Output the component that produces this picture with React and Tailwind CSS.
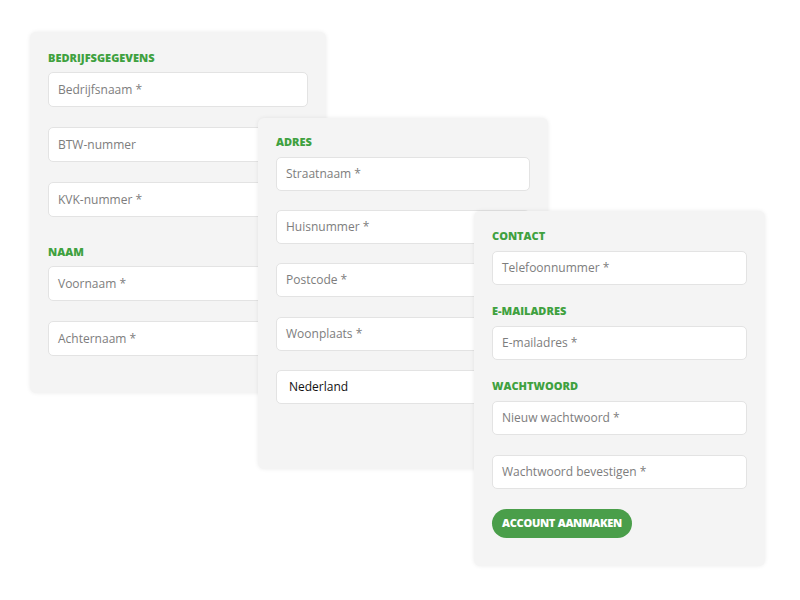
import React from 'react';

const Heading = ({ children, className = '' }) => (
  <h3 className={`text-[11px] leading-4 font-extrabold text-[#3fa13f] uppercase ${className}`}>{children}</h3>
);

const Field = ({ placeholder, value, className = '' }) => (
  <div
    className={`h-[34px] flex items-center bg-white border border-[#e3e3e3] rounded-[5px] ${value ? 'pl-3 text-[#111]' : 'pl-[9px] text-[#7d7d7d]'} text-[12px] ${className}`}
  >
    {value || placeholder}
  </div>
);

const Card = ({ className = '', children }) => (
  <div className={`absolute bg-[#f4f4f4] rounded-md shadow-[0_0_4px_rgba(0,0,0,0.08)] flex flex-col px-[18px] ${className}`}>
    {children}
  </div>
);

export default function App() {
  return (
    <div className="relative w-[800px] h-[600px] bg-white overflow-hidden" style={{ fontFamily: '"Open Sans", "Liberation Sans", sans-serif' }}>
      {/* bedrijf + naam */}
      <Card className="left-[30px] top-[32px] w-[296px] h-[361px] pt-[18px]">
        <Heading>Bedrijfsgegevens</Heading>
        <Field placeholder="Bedrijfsnaam *" className="mt-[6px] h-[35px]" />
        <Field placeholder="BTW-nummer" className="mt-[20px] h-[35px]" />
        <Field placeholder="KVK-nummer *" className="mt-[20px] h-[35px]" />
        <Heading className="mt-[27px]">Naam</Heading>
        <Field placeholder="Voornaam *" className="mt-[6px] h-[35px]" />
        <Field placeholder="Achternaam *" className="mt-[20px] h-[35px]" />
      </Card>

      {/* adres */}
      <Card className="left-[258px] top-[118px] w-[290px] h-[351px] pt-[16px]">
        <Heading>Adres</Heading>
        <Field placeholder="Straatnaam *" className="mt-[7px]" />
        <Field placeholder="Huisnummer *" className="mt-[19px]" />
        <Field placeholder="Postcode *" className="mt-[19px]" />
        <Field placeholder="Woonplaats *" className="mt-[20px]" />
        <Field value="Nederland" className="mt-[19px]" />
      </Card>

      {/* contact + wachtwoord */}
      <Card className="left-[474px] top-[211px] w-[291px] h-[355px] pt-[17px]">
        <Heading>Contact</Heading>
        <Field placeholder="Telefoonnummer *" className="mt-[7px]" />
        <Heading className="mt-[18px]">E-mailadres</Heading>
        <Field placeholder="E-mailadres *" className="mt-[7px] h-[33px]" />
        <Heading className="mt-[18px]">Wachtwoord</Heading>
        <Field placeholder="Nieuw wachtwoord *" className="mt-[7px] h-[33px]" />
        <Field placeholder="Wachtwoord bevestigen *" className="mt-[20px] h-[33px]" />
        <button className="mt-[20px] self-start h-[29px] w-[140px] rounded-full bg-[#4a9e4a] text-white text-[11px] font-extrabold tracking-tight uppercase">
          Account aanmaken
        </button>
      </Card>
    </div>
  );
}
